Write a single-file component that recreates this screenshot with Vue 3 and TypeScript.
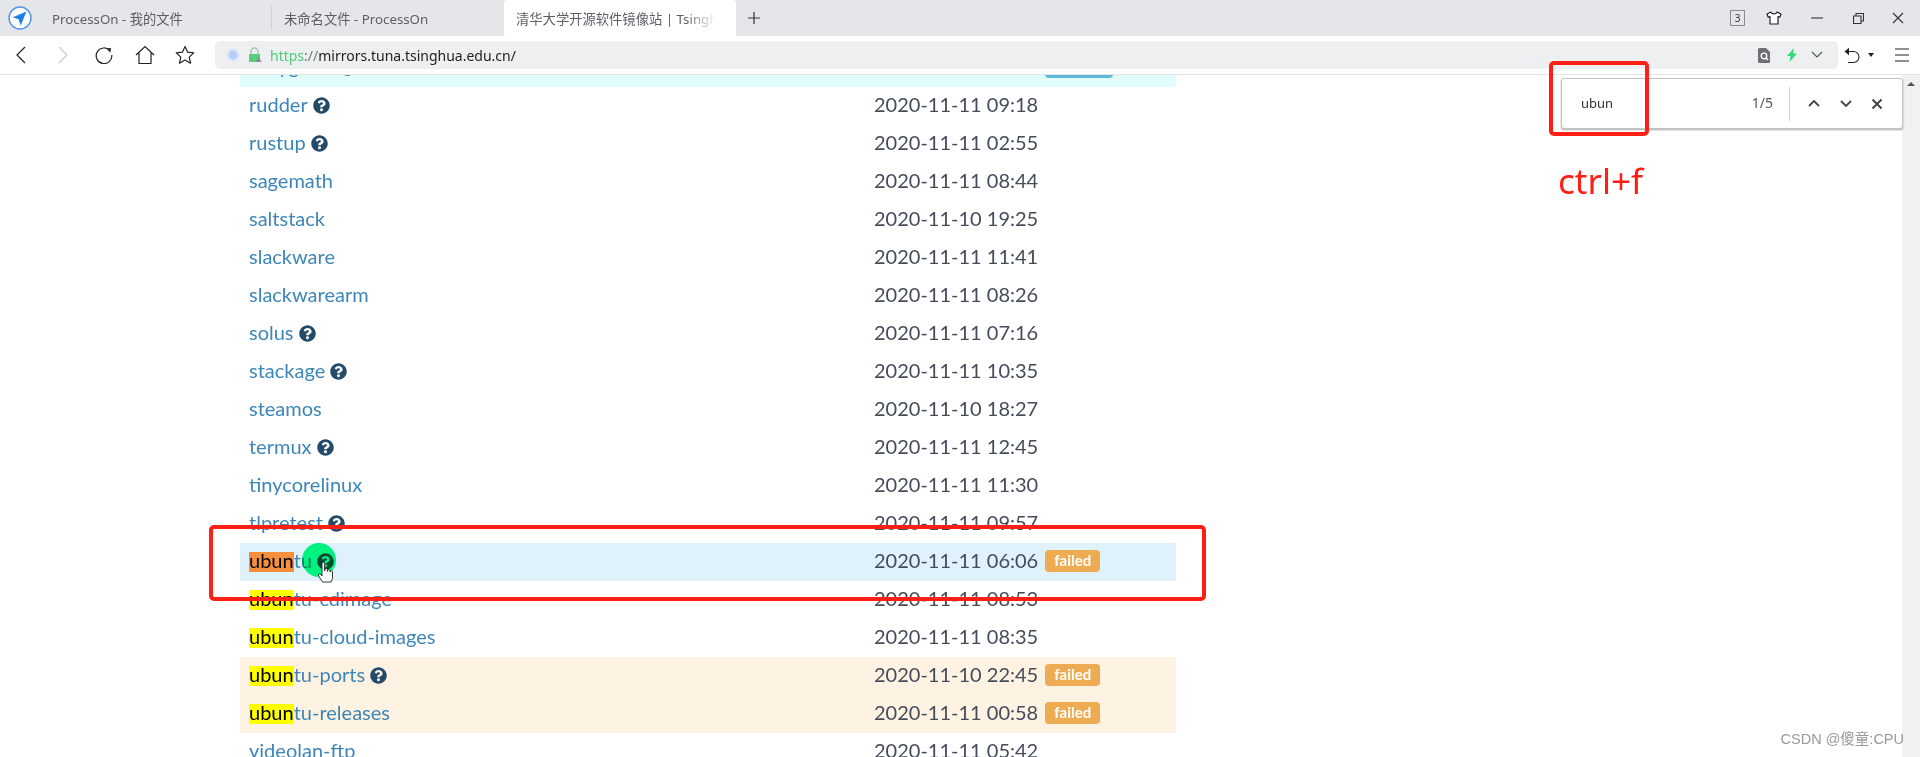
<script setup lang="ts">
interface MirrorRow {
  name: string;
  time: string;
  help?: boolean;
  tone?: string;
  label?: string;
  mark?: string;
}

const rows: MirrorRow[] = [
  { name: "rubygems", time: "2020-11-11 09:02", help: true, tone: "row_cyan", label: "syncing" },
  { name: "rudder", time: "2020-11-11 09:18", help: true },
  { name: "rustup", time: "2020-11-11 02:55", help: true },
  { name: "sagemath", time: "2020-11-11 08:44" },
  { name: "saltstack", time: "2020-11-10 19:25" },
  { name: "slackware", time: "2020-11-11 11:41" },
  { name: "slackwarearm", time: "2020-11-11 08:26" },
  { name: "solus", time: "2020-11-11 07:16", help: true },
  { name: "stackage", time: "2020-11-11 10:35", help: true },
  { name: "steamos", time: "2020-11-10 18:27" },
  { name: "termux", time: "2020-11-11 12:45", help: true },
  { name: "tinycorelinux", time: "2020-11-11 11:30" },
  { name: "tlpretest", time: "2020-11-11 09:57", help: true },
  { name: "tu", time: "2020-11-11 06:06", help: true, tone: "row_blue", label: "failed", mark: "current" },
  { name: "tu-cdimage", time: "2020-11-11 08:53", mark: "match" },
  { name: "tu-cloud-images", time: "2020-11-11 08:35", mark: "match" },
  { name: "tu-ports", time: "2020-11-10 22:45", help: true, tone: "row_orange", label: "failed", mark: "match" },
  { name: "tu-releases", time: "2020-11-11 00:58", tone: "row_orange", label: "failed", mark: "match" },
  { name: "videolan-ftp", time: "2020-11-11 05:42" },
];

const helpPath =
  "M504 256c0 137-111 248-248 248S8 393 8 256C8 119 119 8 256 8s248 111 248 248zM262.700 90c-54.500 0-89.300 23-116.600 63.800-3.500 5.300-2.400 12.400 2.700 16.200l34.700 26.300c5.200 3.900 12.600 3 16.700-2.100 17.900-22.700 30.100-35.800 57.300-35.800 20.400 0 45.700 13.100 45.700 33 0 15-12.400 22.700-32.500 34C247.100 238.500 216 254.900 216 296v4c0 6.600 5.400 12 12 12h56c6.600 0 12-5.400 12-12v-1.300c0-28.500 83.200-29.700 83.200-106.700 0-58-60.200-102-116.500-102zM256 338c-25.400 0-46 20.600-46 46s20.600 46 46 46 46-20.600 46-46-20.600-46-46-46z";
</script>

<template>
  <div class="page">
    <div class="tabbar">
      <div class="logo">
        <svg width="24" height="24" viewBox="0 0 24 24">
          <circle cx="12" cy="12" r="11" fill="#fff" stroke="#4d94ea" stroke-width="1.400" />
          <path d="M18.500 5.500 4.800 11.200 10.600 13.200 12.700 19.500Z" fill="#1b80e8" />
        </svg>
      </div>
      <div class="tab tab_first">ProcessOn - 我的文件</div>
      <div class="tab tab_second">未命名文件 - ProcessOn</div>
      <div class="tab tab_active"><span class="tab_fade">清华大学开源软件镜像站 | Tsinghua Open Source</span></div>
      <svg class="new_tab" width="14" height="14" viewBox="0 0 14 14">
        <path d="M7 1v12M1 7h12" stroke="#333" stroke-width="1.200" fill="none" />
      </svg>
      <div class="win_controls">
        <span class="tab_count">3</span>
        <svg class="shirt" width="16" height="14" viewBox="0 0 16 14">
          <path d="M5 1 1 3l1.200 3.200L4 5.600V13h8V5.600l1.800.6L15 3l-4-2c-.5 2.400-5.500 2.400-6 0Z" fill="#fff" stroke="#222" stroke-width="1.200" stroke-linejoin="round" />
        </svg>
        <svg class="win_min" width="12" height="12" viewBox="0 0 12 12">
          <path d="M0 6h12" stroke="#333" stroke-width="1.100" />
        </svg>
        <svg class="win_restore" width="11" height="11" viewBox="0 0 11 11">
          <path d="M.5 3h7.500v7.500H.5ZM3 3V.5h7.500V8H8" fill="none" stroke="#333" stroke-width="1.100" />
        </svg>
        <svg class="win_close" width="12" height="12" viewBox="0 0 12 12">
          <path d="m1 1 10 10M11 1 1 11" stroke="#333" stroke-width="1.100" />
        </svg>
      </div>
    </div>

    <div class="toolbar">
      <div class="nav_group">
        <svg width="18" height="20" viewBox="0 0 18 20"><path d="M13 2 5 10l8 8" fill="none" stroke="#222" stroke-width="1.200" /></svg>
        <svg width="18" height="20" viewBox="0 0 18 20"><path d="m5 2 8 8-8 8" fill="none" stroke="#c9c9c9" stroke-width="1.200" /></svg>
        <svg width="18" height="18" viewBox="0 0 18 18">
          <path d="M14.800 4.500A7.800 7.800 0 1 0 16.800 9" fill="none" stroke="#222" stroke-width="1.200" />
          <path d="M11.500 2.500 16 2l-.6 4.700Z" fill="#222" />
        </svg>
        <svg width="20" height="20" viewBox="0 0 20 20"><path d="M1 10 10 1.500 19 10M4 8v10.500h12V8" fill="none" stroke="#222" stroke-width="1.200" /></svg>
        <svg width="20" height="20" viewBox="0 0 20 20"><path d="m10 1.500 2.600 5.700 6.200.7-4.600 4.200 1.300 6.100L10 15l-5.500 3.200 1.300-6.100-4.600-4.200 6.200-.7Z" fill="none" stroke="#222" stroke-width="1.200" stroke-linejoin="round" /></svg>
      </div>
      <div class="address">
        <svg width="14" height="14" viewBox="0 0 14 14">
          <circle cx="7" cy="7" r="6.500" fill="#dbe7fb" />
          <circle cx="7" cy="7" r="4.500" fill="#b6d0f8" />
        </svg>
        <svg class="lock" width="14" height="16" viewBox="0 0 14 16">
          <path d="M3 7V4.500a3.500 3.500 0 0 1 7 0V7" fill="none" stroke="#a9c9b4" stroke-width="1.500" />
          <rect x="1" y="7" width="11" height="8" fill="#58cf7a" />
          <path d="m10.500 10 3 5h-6Z" fill="#8a8f96" />
        </svg>
        <span class="url"><span class="url_https">https</span><span class="url_colon">://</span>mirrors.tuna.tsinghua.edu.cn/</span>
        <svg class="doc_search" width="12" height="15" viewBox="0 0 12 15">
          <path d="M0 1.500A1.500 1.500 0 0 1 1.500 0H8l4 4v9.500a1.500 1.500 0 0 1-1.500 1.500h-9A1.500 1.500 0 0 1 0 13.500Z" fill="#6c7075" />
          <circle cx="6" cy="8" r="2.800" fill="none" stroke="#fff" stroke-width="1.300" />
          <path d="m8 10 2 2" stroke="#fff" stroke-width="1.300" />
        </svg>
        <svg class="bolt" width="10" height="14" viewBox="0 0 10 14">
          <path d="M7 0 0 8h3.500L2.500 14 10 5.500H6Z" fill="#2fd97c" />
        </svg>
        <svg class="addr_chevron" width="12" height="8" viewBox="0 0 12 8">
          <path d="m1 1 5 5 5-5" fill="none" stroke="#555" stroke-width="1.100" />
        </svg>
      </div>
      <svg class="undo" width="17" height="17" viewBox="0 0 17 17">
        <path d="M1 4.500h8.500a5.500 5.500 0 0 1 0 11H4" fill="none" stroke="#222" stroke-width="1.100" />
        <path d="M5 .8v7.500L.5 4.500Z" fill="#222" />
      </svg>
      <span class="caret"></span>
      <svg class="menu" width="14" height="14" viewBox="0 0 14 14">
        <path d="M0 1h14M0 7h14M0 13h14" stroke="#222" stroke-width="1.100" />
      </svg>
    </div>

    <div class="viewport">
      <div class="main">
        <div class="mirror_list">
          <div v-for="row in rows" :key="row.time + row.name" class="row" :class="row.tone">
            <div class="name_cell">
              <mark v-if="row.mark" :class="row.mark">ubun</mark><a class="mirror_link">{{ row.name }}</a>
              <svg v-if="row.help" class="help" width="17" height="17" viewBox="0 0 512 512">
                <path :d="helpPath" fill="#234a68" fill-rule="evenodd" />
              </svg>
            </div>
            <div class="time_cell">
              <span>{{ row.time }}</span>
              <span v-if="row.label" class="label" :class="row.label === 'failed' ? 'label_failed' : 'label_syncing'">{{ row.label }}</span>
            </div>
          </div>
        </div>
      </div>
      <div class="scrollbar"><span class="scroll_up"></span></div>
    </div>

    <div class="click_dot"></div>
    <svg class="hand" width="18" height="24" viewBox="0 0 18 24">
      <path d="M5 2.500a1.300 1.300 0 0 1 2.600 0V10l.6-2a1.200 1.200 0 0 1 2.200.3V10.500l.5-1.500a1.200 1.200 0 0 1 2.100.5v1.500l.5-.8a1.100 1.100 0 0 1 2 .6v5.200c0 2.400-.8 3.500-1.500 5H5.500L1.700 15c-1-1.400.6-2.700 1.800-1.600L5 15Z" fill="#fff" stroke="#222" stroke-width=".9" stroke-linejoin="round" />
    </svg>

    <div class="find_bar">
      <span class="find_text">ubun</span>
      <span class="find_count">1/5</span>
      <span class="find_sep"></span>
      <svg width="14" height="9" viewBox="0 0 14 9"><path d="m2 7 5-5 5 5" fill="none" stroke="#444" stroke-width="1.800" /></svg>
      <svg width="14" height="9" viewBox="0 0 14 9"><path d="m2 2 5 5 5-5" fill="none" stroke="#444" stroke-width="1.800" /></svg>
      <svg width="12" height="12" viewBox="0 0 12 12"><path d="m1.500 1.500 9 9M10.500 1.500l-9 9" stroke="#444" stroke-width="2" /></svg>
    </div>

    <div class="red_box red_box_find"></div>
    <div class="red_box red_box_row"></div>
    <div class="ctrl_note">ctrl+f</div>
    <div class="watermark">CSDN @傻童:CPU</div>
  </div>
</template>

<style scoped>
.page {
  position: relative;
  width: 1920px;
  height: 757px;
  overflow: hidden;
  display: flex;
  flex-direction: column;
  background: #fff;
  font-family: "Noto Sans", "Noto Sans CJK SC", sans-serif;
}
.tabbar {
  height: 36px;
  flex-shrink: 0;
  display: flex;
  align-items: stretch;
  background: #e5e6ea;
}
.logo {
  width: 40px;
  display: flex;
  align-items: center;
  justify-content: center;
}
.tab {
  font-size: 13.300px;
  line-height: 38px;
  color: #5c5f66;
  white-space: nowrap;
  overflow: hidden;
}
.tab_first {
  width: 219px;
  padding-left: 12px;
  border-right: 1px solid #d0d1d5;
  margin: 6px 0;
  line-height: 26px;
}
.tab_second {
  width: 220px;
  padding-left: 12px;
  margin: 6px 0;
  line-height: 26px;
}
.tab_active {
  width: 220px;
  padding-left: 12px;
  background: #fff;
  border-radius: 3px 3px 0 0;
}
.tab_fade {
  display: block;
  width: 200px;
  overflow: hidden;
  -webkit-mask-image: linear-gradient(to right, #000 85%, transparent);
  mask-image: linear-gradient(to right, #000 85%, transparent);
}
.new_tab {
  align-self: center;
  margin-left: 11px;
}
.win_controls {
  margin-left: auto;
  display: flex;
  align-items: center;
  padding-right: 16px;
}
.tab_count {
  width: 13px;
  height: 14px;
  border: 1px solid #8c8c8c;
  font-size: 10px;
  line-height: 14px;
  text-align: center;
  color: #333;
  margin-right: 21px;
}
.shirt {
  margin-right: 29px;
}
.win_min {
  margin-right: 30px;
}
.win_restore {
  margin-right: 28px;
}
.toolbar {
  position: relative;
  z-index: 1;
  height: 39px;
  flex-shrink: 0;
  box-sizing: border-box;
  display: flex;
  align-items: center;
  background: #fff;
  border-bottom: 1px solid #e4e4e4;
}
.nav_group {
  width: 215px;
  flex-shrink: 0;
  display: grid;
  grid-template-columns: 42px 42px 40px 42px 38px;
  justify-items: center;
  align-items: center;
  padding-right: 11px;
  box-sizing: border-box;
}
.address {
  width: 1623px;
  height: 28px;
  flex-shrink: 0;
  box-sizing: border-box;
  display: flex;
  align-items: center;
  padding: 0 15px 0 11px;
  border-radius: 5px;
  background: #eeeff1;
}
.lock {
  margin-left: 8px;
}
.url {
  margin-left: 8px;
  font-size: 14px;
  color: #222;
  white-space: nowrap;
}
.url_https {
  color: #4fc97c;
}
.url_colon {
  color: #777;
}
.doc_search {
  margin-left: auto;
}
.bolt {
  margin-left: 17px;
}
.addr_chevron {
  margin-left: 14px;
}
.undo {
  margin-left: 6px;
}
.caret {
  margin-left: 7px;
  border: 3.500px solid transparent;
  border-top: 4px solid #222;
  border-bottom: 0;
}
.menu {
  margin-left: 21px;
}
.viewport {
  flex: 1;
  min-height: 0;
  display: flex;
}
.main {
  flex: 1;
  min-width: 0;
  overflow: hidden;
  padding-left: 240px;
}
.mirror_list {
  width: 936px;
  margin-top: -26px;
  font-family: Lato, "Noto Sans", sans-serif;
  font-size: 20px;
}
.row {
  height: 38px;
  box-sizing: border-box;
  padding-bottom: 4px;
  display: flex;
  align-items: center;
}
.row_cyan {
  background: #e0fcfb;
}
.row_blue {
  background: #dff1fb;
}
.row_orange {
  background: #fef2e3;
}
.name_cell {
  width: 625px;
  padding-left: 9px;
  display: flex;
  align-items: center;
  flex-shrink: 0;
}
.mirror_link {
  color: #3d86b8;
}
mark {
  display: inline-block;
  height: 20px;
  margin-top: 4px;
  line-height: 16px;
  color: #000;
}
.match {
  background: #ffff00;
}
.current {
  background: #f58f3e;
}
.help {
  margin-top: 2px;
  margin-left: 5px;
}
.time_cell {
  display: flex;
  align-items: center;
  color: #454c59;
}
.label {
  margin-top: 2px;
  margin-left: 7px;
  height: 22px;
  padding: 0 9px;
  border-radius: 4px;
  color: #fff;
  font-size: 15px;
  font-weight: 700;
  line-height: 20px;
}
.label_failed {
  background: #edac51;
}
.label_syncing {
  background: #5cb8d8;
}
.scrollbar {
  width: 18px;
  flex-shrink: 0;
  background: #f1f1f1;
  display: flex;
  justify-content: center;
  padding-top: 7px;
  box-sizing: border-box;
}
.scroll_up {
  width: 0;
  height: 0;
  border: 4px solid transparent;
  border-bottom: 4px solid #555;
  border-top: 0;
}
.click_dot {
  position: absolute;
  left: 302px;
  top: 543px;
  width: 34px;
  height: 34px;
  border-radius: 50%;
  background: #00ff80;
  mix-blend-mode: multiply;
}
.hand {
  position: absolute;
  left: 317px;
  top: 561px;
}
.find_bar {
  position: absolute;
  z-index: 2;
  left: 1561px;
  top: 78px;
  width: 342px;
  height: 51px;
  box-sizing: border-box;
  display: flex;
  align-items: center;
  padding: 0 19px 0 19px;
  background: #fff;
  border: 1px solid #c4c4c4;
  border-radius: 3px;
  box-shadow: 0 1px 2px rgba(0, 0, 0, 0.35);
}
.find_text {
  margin-top: -2px;
  font-size: 13px;
  color: #333;
}
.find_count {
  margin-top: -2px;
  margin-left: auto;
  font-size: 14px;
  color: #555;
}
.find_sep {
  width: 1px;
  height: 34px;
  margin: 0 17px 0 16px;
  background: #d0d0d0;
}
.find_bar svg + svg {
  margin-left: 18px;
}
.red_box {
  position: absolute;
  z-index: 3;
  box-sizing: border-box;
  border: 4px solid #ff2015;
  border-radius: 5px;
}
.red_box_find {
  left: 1549px;
  top: 61px;
  width: 100px;
  height: 75px;
}
.red_box_row {
  left: 209px;
  top: 525px;
  width: 997px;
  height: 76px;
}
.ctrl_note {
  position: absolute;
  left: 1558px;
  top: 157px;
  font-size: 35px;
  line-height: 48px;
  color: #ff2015;
  font-family: "Noto Sans", sans-serif;
}
.watermark {
  position: absolute;
  right: 16px;
  top: 730px;
  font-size: 14.500px;
  line-height: 18px;
  color: #9a9a9a;
  font-family: "Liberation Sans", "Noto Sans CJK SC", sans-serif;
}
</style>
